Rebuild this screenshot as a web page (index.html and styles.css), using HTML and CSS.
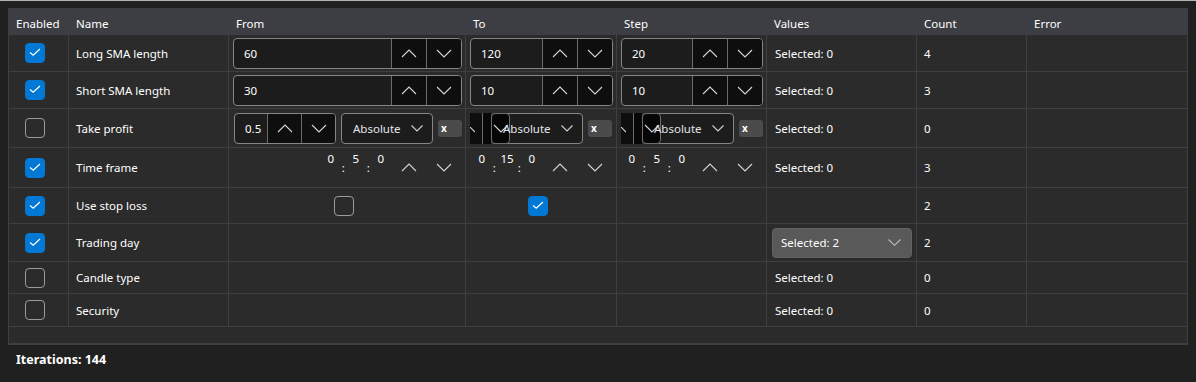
FILE: index.html
```html
<!doctype html>
<html lang="en">
<head>
<meta charset="utf-8">
<meta name="viewport" content="width=device-width, initial-scale=1">
<title>Optimization parameters</title>
<link rel="stylesheet" href="styles.css">
</head>
<body>

<div class="grid">
  <div class="head">
    <div>Enabled</div><div>Name</div><div>From</div><div>To</div><div>Step</div><div>Values</div><div>Count</div><div>Error</div>
  </div>

  <!-- Long SMA length -->
  <div class="row h37">
    <div class="cell mid"><span class="cb on"><svg width="20" height="20" viewBox="0 0 20 20"><path d="M5 9.5 L8.2 12.3 L15 6"/></svg></span></div>
    <div class="cell">Long SMA length</div>
    <div class="cell fit">
      <div class="spin"><span class="val">60</span>
        <span class="sb"><svg class="chev" width="16" height="9" viewBox="0 0 16 9"><path d="M1 8 L8 1 L15 8"/></svg></span>
        <span class="sb"><svg class="chev" width="16" height="9" viewBox="0 0 16 9"><path d="M1 1 L8 8 L15 1"/></svg></span>
      </div>
    </div>
    <div class="cell fit">
      <div class="spin"><span class="val">120</span>
        <span class="sb"><svg class="chev" width="16" height="9" viewBox="0 0 16 9"><path d="M1 8 L8 1 L15 8"/></svg></span>
        <span class="sb"><svg class="chev" width="16" height="9" viewBox="0 0 16 9"><path d="M1 1 L8 8 L15 1"/></svg></span>
      </div>
    </div>
    <div class="cell fit">
      <div class="spin"><span class="val">20</span>
        <span class="sb"><svg class="chev" width="16" height="9" viewBox="0 0 16 9"><path d="M1 8 L8 1 L15 8"/></svg></span>
        <span class="sb"><svg class="chev" width="16" height="9" viewBox="0 0 16 9"><path d="M1 1 L8 8 L15 1"/></svg></span>
      </div>
    </div>
    <div class="cell values">Selected: 0</div>
    <div class="cell">4</div>
    <div class="cell"></div>
  </div>

  <!-- Short SMA length -->
  <div class="row h37">
    <div class="cell mid"><span class="cb on"><svg width="20" height="20" viewBox="0 0 20 20"><path d="M5 9.5 L8.2 12.3 L15 6"/></svg></span></div>
    <div class="cell">Short SMA length</div>
    <div class="cell fit">
      <div class="spin"><span class="val">30</span>
        <span class="sb"><svg class="chev" width="16" height="9" viewBox="0 0 16 9"><path d="M1 8 L8 1 L15 8"/></svg></span>
        <span class="sb"><svg class="chev" width="16" height="9" viewBox="0 0 16 9"><path d="M1 1 L8 8 L15 1"/></svg></span>
      </div>
    </div>
    <div class="cell fit">
      <div class="spin"><span class="val">10</span>
        <span class="sb"><svg class="chev" width="16" height="9" viewBox="0 0 16 9"><path d="M1 8 L8 1 L15 8"/></svg></span>
        <span class="sb"><svg class="chev" width="16" height="9" viewBox="0 0 16 9"><path d="M1 1 L8 8 L15 1"/></svg></span>
      </div>
    </div>
    <div class="cell fit">
      <div class="spin"><span class="val">10</span>
        <span class="sb"><svg class="chev" width="16" height="9" viewBox="0 0 16 9"><path d="M1 8 L8 1 L15 8"/></svg></span>
        <span class="sb"><svg class="chev" width="16" height="9" viewBox="0 0 16 9"><path d="M1 1 L8 8 L15 1"/></svg></span>
      </div>
    </div>
    <div class="cell values">Selected: 0</div>
    <div class="cell">3</div>
    <div class="cell"></div>
  </div>

  <!-- Take profit -->
  <div class="row h39">
    <div class="cell mid"><span class="cb"></span></div>
    <div class="cell">Take profit</div>
    <div class="cell fit tp">
      <div class="spin small"><span class="val">0.5</span>
        <span class="sb"><svg class="chev" width="16" height="9" viewBox="0 0 16 9"><path d="M1 8 L8 1 L15 8"/></svg></span>
        <span class="sb"><svg class="chev" width="16" height="9" viewBox="0 0 16 9"><path d="M1 1 L8 8 L15 1"/></svg></span>
      </div>
      <div class="combo"><span class="lbl">Absolute</span><svg class="chev" width="12" height="7" viewBox="0 0 12 7"><path d="M0.5 0.5 L6 6 L11.5 0.5"/></svg></div>
      <span class="xbtn">x</span>
    </div>
    <div class="cell fit tp">
      <div class="stub"><span class="tail"><svg class="chev" width="5" height="9" viewBox="0 0 5 9"><path d="M-2 1 L5 8"/></svg></span><span class="rest"></span></div>
      <div class="combo"><span class="ghost"><svg class="chev" width="16" height="9" viewBox="0 0 16 9"><path d="M1 1 L8 8 L15 1"/></svg></span><span class="lbl">Absolute</span><svg class="chev" width="12" height="7" viewBox="0 0 12 7"><path d="M0.5 0.5 L6 6 L11.5 0.5"/></svg></div>
      <span class="xbtn">x</span>
    </div>
    <div class="cell fit tp">
      <div class="stub"><span class="tail"><svg class="chev" width="5" height="9" viewBox="0 0 5 9"><path d="M-2 1 L5 8"/></svg></span><span class="rest"></span></div>
      <div class="combo"><span class="ghost"><svg class="chev" width="16" height="9" viewBox="0 0 16 9"><path d="M1 1 L8 8 L15 1"/></svg></span><span class="lbl">Absolute</span><svg class="chev" width="12" height="7" viewBox="0 0 12 7"><path d="M0.5 0.5 L6 6 L11.5 0.5"/></svg></div>
      <span class="xbtn">x</span>
    </div>
    <div class="cell values">Selected: 0</div>
    <div class="cell">0</div>
    <div class="cell"></div>
  </div>

  <!-- Time frame -->
  <div class="row h40">
    <div class="cell mid"><span class="cb on"><svg width="20" height="20" viewBox="0 0 20 20"><path d="M5 9.5 L8.2 12.3 L15 6"/></svg></span></div>
    <div class="cell">Time frame</div>
    <div class="cell fit">
      <div class="spin time"><span class="val"><i>0</i><b>:</b><i>5</i><b>:</b><i>0</i></span>
        <span class="sb"><svg class="chev" width="16" height="9" viewBox="0 0 16 9"><path d="M1 8 L8 1 L15 8"/></svg></span>
        <span class="sb"><svg class="chev" width="16" height="9" viewBox="0 0 16 9"><path d="M1 1 L8 8 L15 1"/></svg></span>
      </div>
    </div>
    <div class="cell fit">
      <div class="spin time"><span class="val"><i>0</i><b>:</b><i>15</i><b>:</b><i>0</i></span>
        <span class="sb"><svg class="chev" width="16" height="9" viewBox="0 0 16 9"><path d="M1 8 L8 1 L15 8"/></svg></span>
        <span class="sb"><svg class="chev" width="16" height="9" viewBox="0 0 16 9"><path d="M1 1 L8 8 L15 1"/></svg></span>
      </div>
    </div>
    <div class="cell fit">
      <div class="spin time"><span class="val"><i>0</i><b>:</b><i>5</i><b>:</b><i>0</i></span>
        <span class="sb"><svg class="chev" width="16" height="9" viewBox="0 0 16 9"><path d="M1 8 L8 1 L15 8"/></svg></span>
        <span class="sb"><svg class="chev" width="16" height="9" viewBox="0 0 16 9"><path d="M1 1 L8 8 L15 1"/></svg></span>
      </div>
    </div>
    <div class="cell values">Selected: 0</div>
    <div class="cell">3</div>
    <div class="cell"></div>
  </div>

  <!-- Use stop loss -->
  <div class="row h36">
    <div class="cell mid"><span class="cb on"><svg width="20" height="20" viewBox="0 0 20 20"><path d="M5 9.5 L8.2 12.3 L15 6"/></svg></span></div>
    <div class="cell">Use stop loss</div>
    <div class="cell mid"><span class="cb"></span></div>
    <div class="cell mid"><span class="cb on"><svg width="20" height="20" viewBox="0 0 20 20"><path d="M5 9.5 L8.2 12.3 L15 6"/></svg></span></div>
    <div class="cell"></div>
    <div class="cell values"></div>
    <div class="cell">2</div>
    <div class="cell"></div>
  </div>

  <!-- Trading day -->
  <div class="row h38">
    <div class="cell mid"><span class="cb on"><svg width="20" height="20" viewBox="0 0 20 20"><path d="M5 9.5 L8.2 12.3 L15 6"/></svg></span></div>
    <div class="cell">Trading day</div>
    <div class="cell"></div>
    <div class="cell"></div>
    <div class="cell"></div>
    <div class="cell fit pick">
      <div class="select"><span>Selected: 2</span><svg class="chev" width="13" height="7" viewBox="0 0 13 7"><path d="M0.5 0.5 L6.5 6.3 L12.5 0.5"/></svg></div>
    </div>
    <div class="cell">2</div>
    <div class="cell"></div>
  </div>

  <!-- Candle type -->
  <div class="row h32">
    <div class="cell mid"><span class="cb"></span></div>
    <div class="cell">Candle type</div>
    <div class="cell"></div>
    <div class="cell"></div>
    <div class="cell"></div>
    <div class="cell values">Selected: 0</div>
    <div class="cell">0</div>
    <div class="cell"></div>
  </div>

  <!-- Security -->
  <div class="row h33">
    <div class="cell mid"><span class="cb"></span></div>
    <div class="cell">Security</div>
    <div class="cell"></div>
    <div class="cell"></div>
    <div class="cell"></div>
    <div class="cell values">Selected: 0</div>
    <div class="cell">0</div>
    <div class="cell"></div>
  </div>

  <div class="filler"></div>
</div>

<div class="footer">Iterations: 144</div>

</body>
</html>
```

FILE: styles.css
```css
body { margin:0; background:#202020; color:#fff; font-family:"Noto Sans", "Open Sans", sans-serif; font-size:11.5px; border-top:1px solid #b4b4b4 }

.grid { margin:7px 0 0 8px; width:1180px; background:#2b2b2b; border-bottom:2px solid #3e3e45 }
.head, .row { display:grid; grid-template-columns:60px 160px 237px 151px 150px 150px 110px 161px }
.head { height:27px; background:#3d3e43; padding-left:1px }
.head div { display:flex; align-items:center; padding:3px 0 0 7px }
.head div:first-child { padding-left:7px }

.row { box-sizing:border-box; border-left:1px solid #3e3e45; border-bottom:1px solid #3e3e45 }
.h32 { height:32px } .h33 { height:33px } .h36 { height:36px } .h37 { height:37px }
.h38 { height:38px } .h39 { height:39px } .h40 { height:40px }

.cell { display:flex; align-items:center; padding:0 7px; border-right:1px solid #3e3e45; white-space:nowrap; overflow:hidden; min-width:0 }
.cell.mid { justify-content:center; padding:0 }
.cell.fit { padding:0 3px 0 4px }
.cell.values { padding-left:8px }
.cell.pick { padding:0 4px 0 5px }

/* checkbox */
.cb { width:20px; height:20px; box-sizing:border-box; border:1px solid #9a9a9a; border-radius:4px; margin-right:7px }
.cb.on { background:#0078d4; border-color:#0078d4 }
.cb svg { display:block; margin:-1px }
.cb path { fill:none; stroke:#fff; stroke-width:1.2 }

.chev { display:block }
.chev path { fill:none; stroke:#d4d4d4; stroke-width:1.1 }

/* numeric up-down */
.spin { flex:1; display:flex; height:31px; box-sizing:border-box; border:1px solid #858585; border-radius:4px; background:#1c1c1c; overflow:hidden }
.spin .val { flex:1; display:flex; align-items:center; padding-left:10px }
.sb { width:34px; flex:none; display:flex; align-items:center; justify-content:center; border-left:1px solid #6b6b6b; background:#0e0e0e }
.spin.small { flex:none; width:102px; margin-left:1px }
.spin.small .val { padding-left:10px }
.spin.small .sb { width:33px }

/* time picker */
.spin.time { border-color:transparent; background:none }
.spin.time .sb { background:none; border-left:1px solid transparent }
.spin.time .val { justify-content:flex-end; padding:0 4px 0 0 }
.spin.time i, .spin.time b { font-style:normal; font-weight:normal; width:12.5px; text-align:center }
.spin.time i { margin-bottom:18px }

/* take profit row */
.tp { gap:5px }
.combo { position:relative; flex:none; width:92px; height:31px; box-sizing:border-box; border:1px solid #858585; border-radius:4px; background:#1c1c1c; display:flex; align-items:center; justify-content:space-between; padding:0 9px 0 11px; color:#e2e4ea }
.combo .lbl { position:relative; z-index:1 }
.ghost { position:absolute; left:-1px; top:-1px; width:19px; height:31px; box-sizing:border-box; border:1px solid #6e6e6e; border-radius:4px; background:#060606; overflow:hidden; display:flex; align-items:center; padding-left:1px }
.xbtn { flex:none; width:24px; height:17px; box-sizing:border-box; border-radius:3px; background:#4b4b4b; font-weight:bold; font-size:10px; line-height:17px; padding-left:3px }
.stub { flex:none; width:21px; height:31px; display:flex; margin-right:-5px; background:#0e0e0e }
.stub .tail { width:12px; display:flex; align-items:center }
.stub .rest { flex:1; border-left:1px solid #6b6b6b; background:#080808 }

/* values drop-down */
.select { flex:1; height:30px; box-sizing:border-box; border:1px solid #626262; border-radius:4px; background:#595959; display:flex; align-items:center; justify-content:space-between; padding:0 10px 0 8px }
.select .chev path { stroke:#bdbdbd }

.filler { height:16px; border-left:1px solid #3e3e45; border-right:1px solid #3e3e45 }

.footer { margin-top:7px; padding:0 16px; line-height:16px; font-weight:bold; font-size:12.5px }
```
